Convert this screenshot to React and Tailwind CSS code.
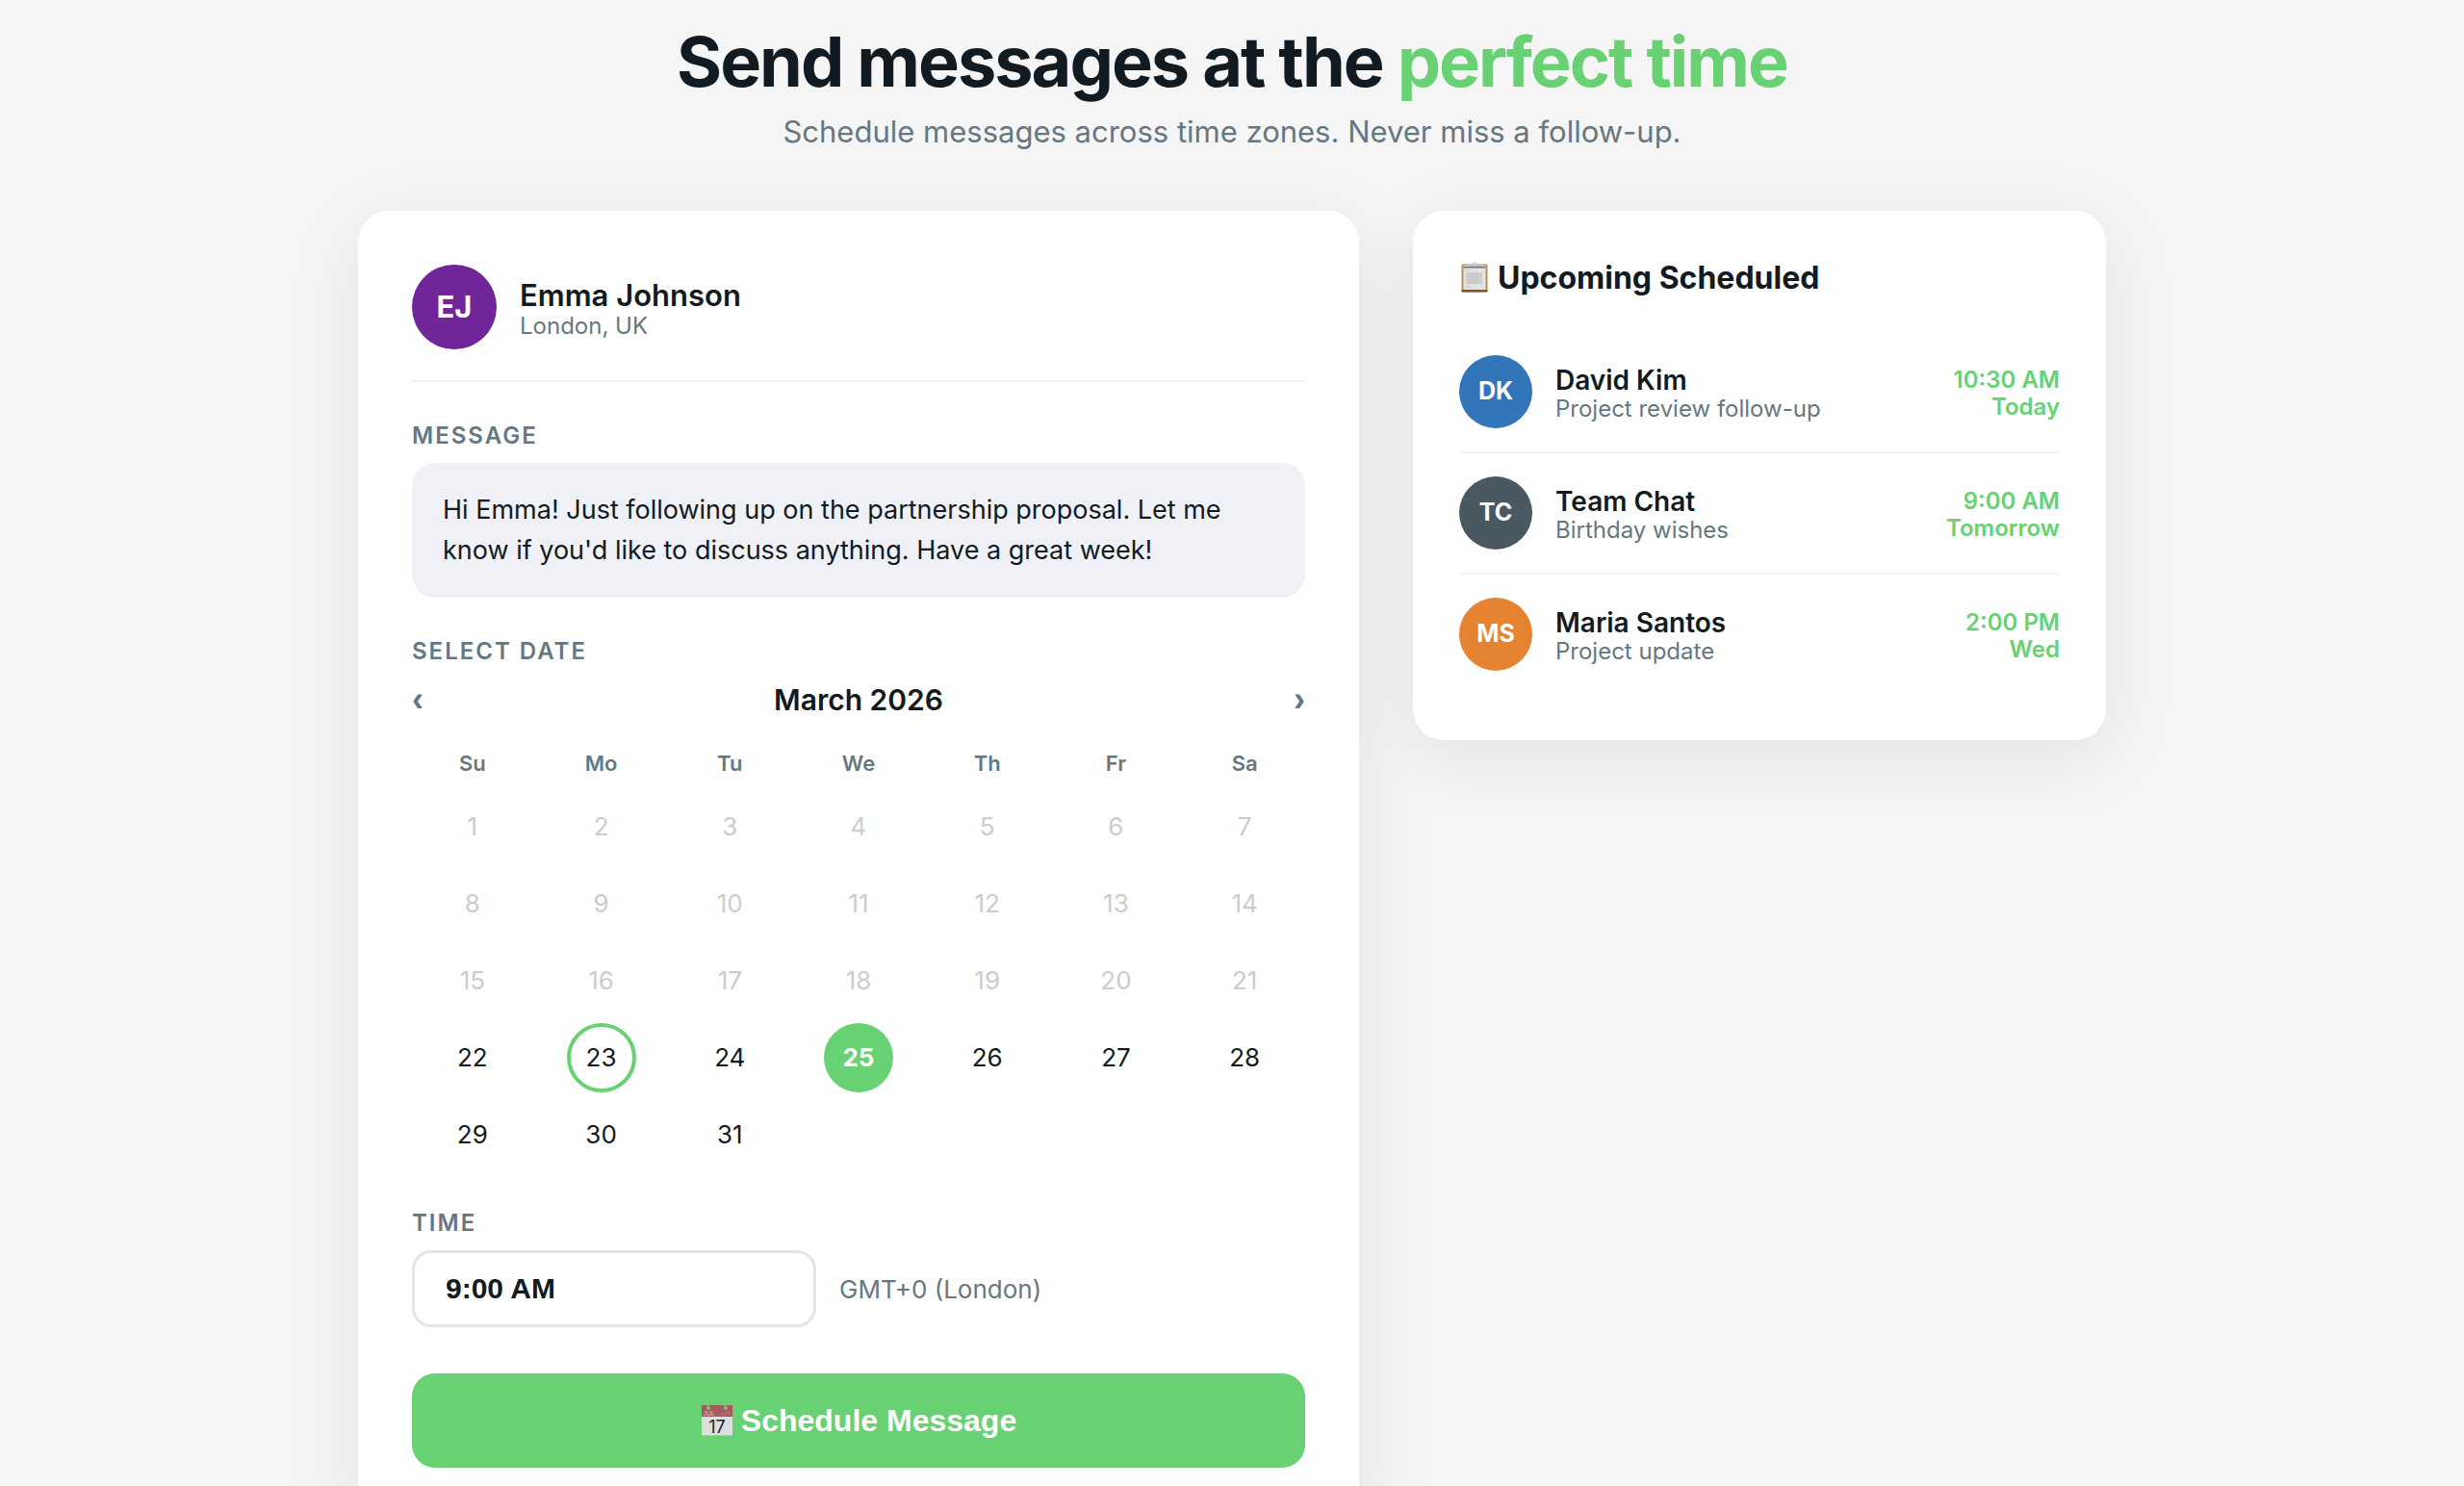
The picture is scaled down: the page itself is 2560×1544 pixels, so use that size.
import React, { useState } from 'react';

const WEEKDAYS = ['Su', 'Mo', 'Tu', 'We', 'Th', 'Fr', 'Sa'];
const DAYS = Array.from({ length: 31 }, (_, i) => i + 1);
const TODAY = 23;
const FIRST_OPEN_DAY = 22;

const UPCOMING = [
  { initials: 'DK', name: 'David Kim', note: 'Project review follow-up', time: '10:30 AM', day: 'Today', color: 'bg-[#3275b9]' },
  { initials: 'TC', name: 'Team Chat', note: 'Birthday wishes', time: '9:00 AM', day: 'Tomorrow', color: 'bg-[#4a5961]' },
  { initials: 'MS', name: 'Maria Santos', note: 'Project update', time: '2:00 PM', day: 'Wed', color: 'bg-[#e58331]' },
];

const labelClass = 'mt-[42px] mb-[14px] block text-2xl leading-7 font-semibold tracking-[2px] text-[#667781]';
const arrowClass = "font-['Liberation_Sans',sans-serif] text-4xl leading-[44px] font-bold text-[#667781]";

function ClipboardIcon() {
  return (
    <svg viewBox="0 0 32 34" className="h-[34px] w-8 shrink-0" aria-hidden="true">
      <rect x="2.5" y="2.5" width="27" height="29" rx="1.5" fill="#b58f55" />
      <path d="M2.5 29h27v1.5q0 1-1 1h-25q-1 0-1-1z" fill="#7d5a33" />
      <rect x="4.5" y="4" width="23" height="25" fill="#e3e3e3" />
      <rect x="7" y="11" width="17" height="12" fill="#d0d0d0" />
      <path d="M7 9h4M8 13h15M8 16h13M8 19h15M8 22h12M7 26h5" stroke="#c4c4c4" strokeWidth="1" />
      <path d="M4.5 5h23v1.5h-23z" fill="#77736c" />
      <path d="M6 5q0-2 1.500-2H12q1.500 0 2-1.500a2.200 2.200 0 0 1 4 0q.5 1.500 2 1.500h4.500q1.500 0 1.500 2z" fill="#bcc3ca" />
      <circle cx="16" cy="2" r=".9" fill="#fff" />
    </svg>
  );
}

function CalendarIcon() {
  return (
    <svg viewBox="0 0 34 34" className="h-[34px] w-[34px] shrink-0" aria-hidden="true">
      <rect x="1" y="1" width="32" height="32" fill="#dedede" />
      <rect x="1" y="1" width="32" height="12" fill="#a65c5e" />
      <path d="M1 32h32v1H1z" fill="#bdbdbd" />
      <circle cx="8" cy="4" r="1.9" fill="#68d173" />
      <circle cx="26" cy="4" r="1.9" fill="#68d173" />
      <path d="M8 0v3M24 0l2 3" stroke="#68d173" strokeWidth="1.3" />
      <path d="M19 11.5v-2M21.5 11.5V9M24 11.5V8.5M26.5 11.5V8M29 11.5V7.5" stroke="#b57476" strokeWidth="1.5" />
      <text x="2.5" y="12" fontSize="7" fontWeight="400" fill="#e0b9ba">JUL</text>
      <text x="17" y="29.5" fontSize="18" fontWeight="400" textAnchor="middle" fill="#222" className="font-[Inter,sans-serif]">17</text>
    </svg>
  );
}

function Calendar() {
  const [selected, setSelected] = useState(25);

  const dayClass = (day) => {
    if (day === selected) return 'bg-[#68d173] font-bold text-white';
    if (day === TODAY) return 'border-4 border-[#68d173]';
    if (day < FIRST_OPEN_DAY) return 'text-[#cccccc]';
    return '';
  };

  return (
    <div>
      <div className="flex h-11 items-center justify-between">
        <button type="button" aria-label="Previous month" className={arrowClass}>‹</button>
        <span className="text-[30px] leading-10 font-semibold">March 2026</span>
        <button type="button" aria-label="Next month" className={arrowClass}>›</button>
      </div>

      <div className="mt-[22px] grid grid-cols-7 gap-2 text-center">
        {WEEKDAYS.map((d) => (
          <span key={d} className="py-2 text-[22px] leading-7 font-semibold text-[#667781]">{d}</span>
        ))}
        {DAYS.map((day) => (
          <button
            key={day}
            type="button"
            disabled={day < FIRST_OPEN_DAY}
            onClick={() => setSelected(day)}
            className={`mx-auto flex size-[72px] items-center justify-center rounded-full text-[26px] leading-8 ${dayClass(day)}`}
          >
            {day}
          </button>
        ))}
      </div>
    </div>
  );
}

function UpcomingItem({ item }) {
  return (
    <li className="flex items-center gap-6 border-b-2 border-[#f5f5f5] py-6 last:border-b-0">
      <div className={`flex size-[76px] shrink-0 items-center justify-center rounded-full text-[25px] font-bold text-white ${item.color}`}>
        {item.initials}
      </div>
      <div className="min-w-0 flex-1 pt-1">
        <div className="text-[28px] leading-8 font-semibold">{item.name}</div>
        <div className="text-2xl leading-7 text-[#667781]">{item.note}</div>
      </div>
      <div className="pt-1 text-right text-2xl leading-7 font-semibold text-[#68d173]">
        <div>{item.time}</div>
        <div>{item.day}</div>
      </div>
    </li>
  );
}

export default function App() {
  const [message, setMessage] = useState(
    "Hi Emma! Just following up on the partnership proposal. Let me know if you'd like to discuss anything. Have a great week!"
  );
  const [time, setTime] = useState('9:00 AM');

  return (
    <div className="h-screen overflow-hidden bg-[#f5f5f5] px-8 font-[Inter,sans-serif] text-[#111b21]">
      {/* Header */}
      <header className="pt-[22px] text-center">
        <h1 className="text-7xl leading-[84px] font-bold tracking-[-2px]">
          Send messages at the <span className="text-[#68d173]">perfect time</span>
        </h1>
        <p className="mt-[11px] text-[31px] leading-10 text-[#667781]">
          Schedule messages across time zones. Never miss a follow-up.
        </p>
      </header>

      <main className="mx-auto mt-[62px] grid max-w-[1816px] grid-cols-[13fr_9fr] items-start gap-14">
        {/* Composer */}
        <section className="rounded-[32px] bg-white p-14 shadow-[0_16px_80px_rgba(0,0,0,0.08)]">
          <div className="flex items-center gap-6 border-b-2 border-[#f0f0f0] pb-8">
            <div className="flex size-[88px] items-center justify-center rounded-full bg-[#702699] text-[31px] font-bold text-white">
              EJ
            </div>
            <div className="pt-1">
              <div className="text-[31px] leading-9 font-semibold">Emma Johnson</div>
              <div className="text-2xl leading-7 text-[#667781]">London, UK</div>
            </div>
          </div>

          <label htmlFor="message" className={labelClass}>MESSAGE</label>
          <textarea
            id="message"
            rows={2}
            value={message}
            onChange={(e) => setMessage(e.target.value)}
            className="block w-full resize-none overflow-hidden rounded-3xl bg-[#f0f1f6] px-8 py-7 text-[27px] leading-[42px]"
          />

          <div className={labelClass}>SELECT DATE</div>
          <Calendar />

          <label htmlFor="time" className={labelClass}>TIME</label>
          <div className="flex items-center gap-6">
            <input
              id="time"
              value={time}
              onChange={(e) => setTime(e.target.value)}
              className="h-20 w-[420px] rounded-[20px] border-3 border-[#e5e5e5] px-8 font-['Liberation_Sans',sans-serif] text-[30px] font-bold"
            />
            <span className="text-[26px] text-[#667781]">GMT+0 (London)</span>
          </div>

          <button
            type="button"
            className="mt-12 flex h-[98px] w-full items-center justify-center gap-2 rounded-3xl bg-[#68d173] font-['Liberation_Sans',sans-serif] text-[32px] font-bold text-white"
          >
            <CalendarIcon />
            Schedule Message
          </button>
        </section>

        {/* Upcoming */}
        <section className="rounded-[32px] bg-white p-12 shadow-[0_16px_80px_rgba(0,0,0,0.08)]">
          <h2 className="mb-[34px] flex h-11 items-center gap-2 text-[32px] font-bold">
            <ClipboardIcon />
            Upcoming Scheduled
          </h2>
          <ul>
            {UPCOMING.map((item) => (
              <UpcomingItem key={item.name} item={item} />
            ))}
          </ul>
        </section>
      </main>
    </div>
  );
}
